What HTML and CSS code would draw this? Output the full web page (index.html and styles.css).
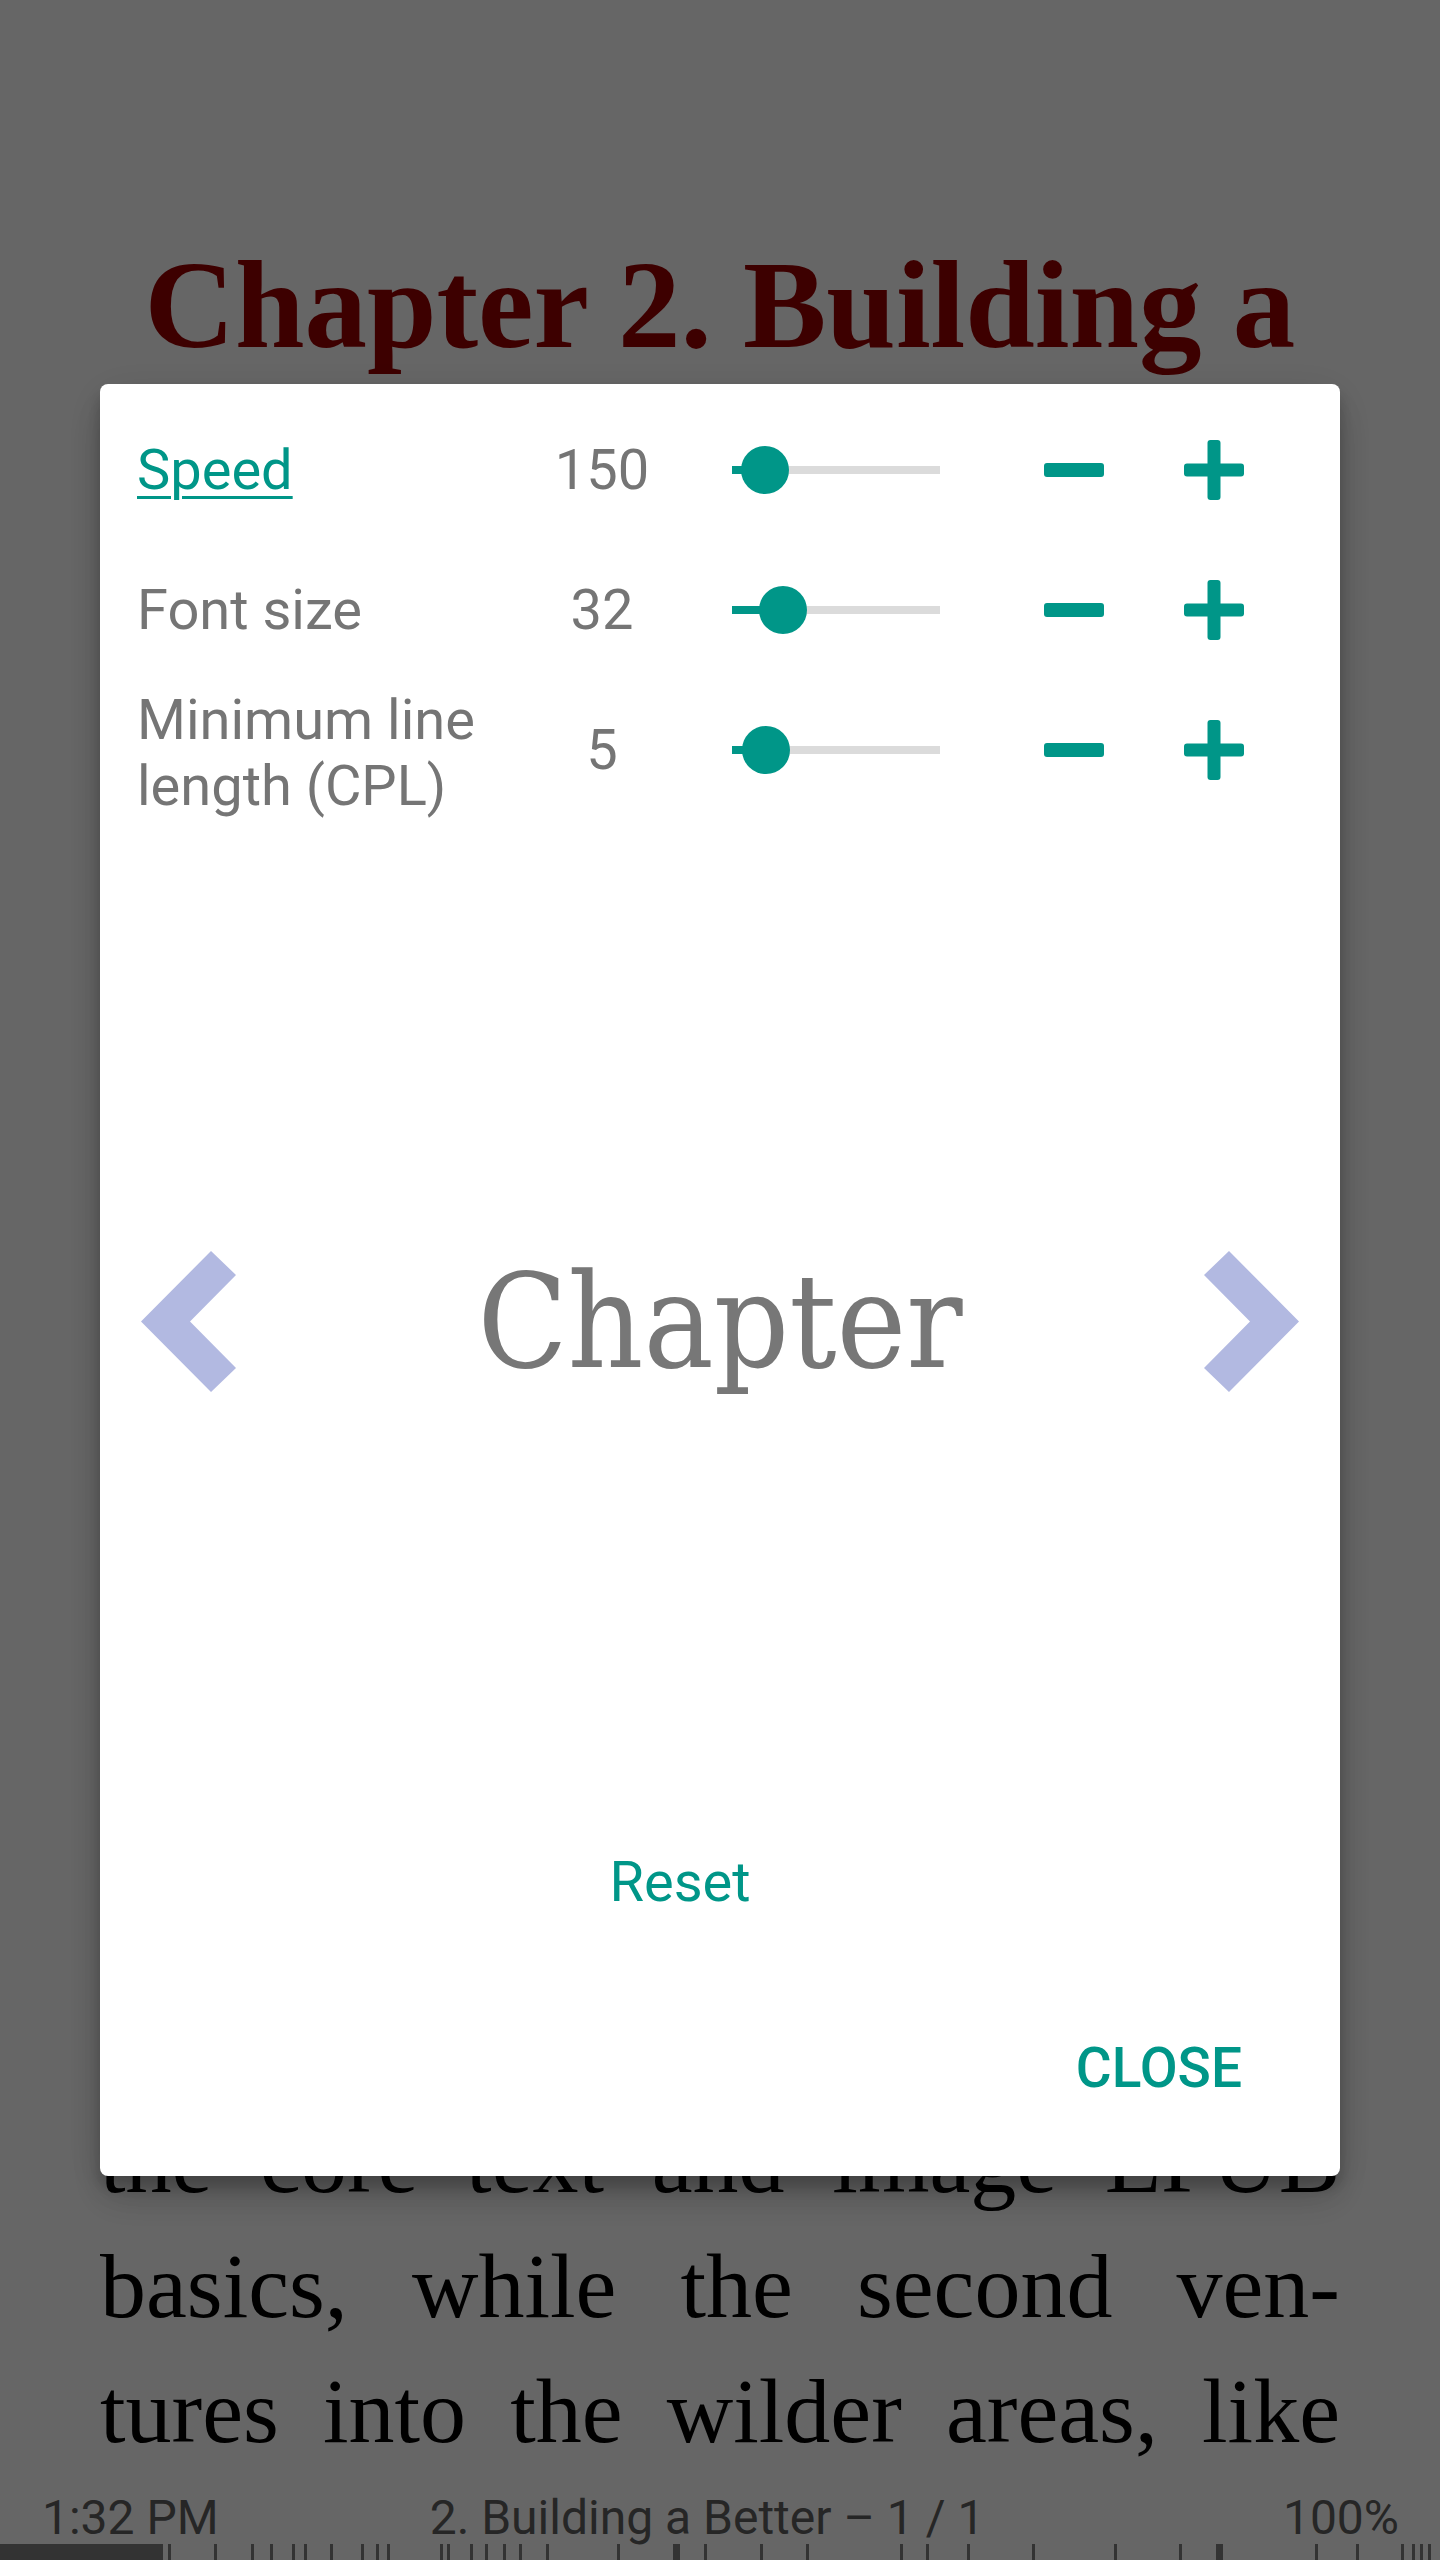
FILE: index.html
```html
<!DOCTYPE html>
<html lang="en">
<head>
<meta charset="utf-8">
<title>Reader – speed reading settings</title>
<link rel="stylesheet" href="styles.css">
</head>
<body>
<div class="screen">
  <main class="reader">
    <h1 class="chapter-title">Chapter 2. Building a Better EPUB: Fundamental Accessibility</h1>
    <p class="body-text">
      <span class="line">Accessibility is not a feature</span>
      <span class="line">that can be bolted on at the</span>
      <span class="line">end of production; it has to</span>
      <span class="line">be designed into the content</span>
      <span class="line">from the very start. Getting</span>
      <span class="line">the fundamentals right makes</span>
      <span class="line">everything that follows much</span>
      <span class="line">simpler. This chapter is split</span>
      <span class="line">into two parts: the first one</span>
      <span class="line">covers the structure of both</span>
      <span class="line">the core text and image EPUB</span>
      <span class="line">basics, while the second ven-</span>
      <span class="line">tures into the wilder areas, like</span>
    </p>
  </main>
  <footer class="status-bar">
    <div class="status-row">
      <span class="time">1:32 PM</span>
      <span class="chapter">2. Building a Better – 1 / 1</span>
      <span class="percent">100%</span>
    </div>
    <div class="progress">
      <div class="progress-fill"></div>
      <span class="tick" style="left:168px"></span>
      <span class="tick" style="left:214px"></span>
      <span class="tick" style="left:251px"></span>
      <span class="tick" style="left:270px"></span>
      <span class="tick" style="left:292px"></span>
      <span class="tick" style="left:304px"></span>
      <span class="tick" style="left:330px"></span>
      <span class="tick" style="left:361px"></span>
      <span class="tick" style="left:376px"></span>
      <span class="tick" style="left:387px"></span>
      <span class="tick" style="left:440px"></span>
      <span class="tick" style="left:447px"></span>
      <span class="tick" style="left:470px"></span>
      <span class="tick" style="left:485px"></span>
      <span class="tick" style="left:503px"></span>
      <span class="tick" style="left:519px"></span>
      <span class="tick" style="left:546px"></span>
      <span class="tick" style="left:617px"></span>
      <span class="tick tick-wide" style="left:673px"></span>
      <span class="tick" style="left:704px"></span>
      <span class="tick" style="left:760px"></span>
      <span class="tick" style="left:806px"></span>
      <span class="tick" style="left:900px"></span>
      <span class="tick" style="left:926px"></span>
      <span class="tick" style="left:967px"></span>
      <span class="tick" style="left:1032px"></span>
      <span class="tick" style="left:1114px"></span>
      <span class="tick" style="left:1179px"></span>
      <span class="tick tick-wide" style="left:1216px"></span>
      <span class="tick" style="left:1315px"></span>
      <span class="tick" style="left:1356px"></span>
      <span class="tick" style="left:1401px"></span>
      <span class="tick" style="left:1412px"></span>
      <span class="tick" style="left:1420px"></span>
      <span class="tick" style="left:1428px"></span>
    </div>
  </footer>
</div>

<div class="overlay">
  <div class="dialog">
    <div class="settings">
      <a class="label label-active" href="#">Speed</a>
      <span class="value">150</span>
      <div class="slider"><div class="track"><div class="fill" style="width:33px"></div><span class="thumb" style="left:33px"></span></div></div>
      <span class="step"><span class="minus"></span></span>
      <span class="step"><svg class="plus" width="60" height="60" viewBox="0 0 60 60"><rect x="0" y="23.5" width="60" height="13" rx="3"/><rect x="23.5" y="0" width="13" height="60" rx="3"/></svg></span>

      <span class="label">Font size</span>
      <span class="value">32</span>
      <div class="slider"><div class="track"><div class="fill" style="width:51px"></div><span class="thumb" style="left:51px"></span></div></div>
      <span class="step"><span class="minus"></span></span>
      <span class="step"><svg class="plus" width="60" height="60" viewBox="0 0 60 60"><rect x="0" y="23.5" width="60" height="13" rx="3"/><rect x="23.5" y="0" width="13" height="60" rx="3"/></svg></span>

      <span class="label label-wrap">Minimum line length (CPL)</span>
      <span class="value">5</span>
      <div class="slider"><div class="track"><div class="fill" style="width:34px"></div><span class="thumb" style="left:34px"></span></div></div>
      <span class="step"><span class="minus"></span></span>
      <span class="step"><svg class="plus" width="60" height="60" viewBox="0 0 60 60"><rect x="0" y="23.5" width="60" height="13" rx="3"/><rect x="23.5" y="0" width="13" height="60" rx="3"/></svg></span>
    </div>

    <div class="preview">
      <svg class="chev" viewBox="0 0 95 141" width="95" height="141"><polygon points="70,0 95,24 49,70.5 95,117 70,141 0,70.5"/></svg>
      <span class="preview-word">Chapter</span>
      <svg class="chev" viewBox="0 0 95 141" width="95" height="141"><polygon points="25,0 0,24 46,70.5 0,117 25,141 95,70.5"/></svg>
    </div>

    <div class="reset-row"><span class="reset">Reset</span></div>

    <div class="actions"><span class="close">CLOSE</span></div>
  </div>
</div>
</body>
</html>
```

FILE: styles.css
```css
html, body {
  margin: 0;
  padding: 0;
}

body {
  width: 1440px;
  height: 2560px;
  overflow: hidden;
  background: #ffffff;
  font-family: Roboto, "Liberation Sans", sans-serif;
}

.screen {
  display: flex;
  flex-direction: column;
  height: 2560px;
}

.reader {
  flex: 1;
  min-height: 0;
  overflow: hidden;
  padding: 0 100px;
}

.chapter-title {
  margin: 230px 0 19px;
  font: bold 125px/150px "Liberation Serif", serif;
  color: #990000;
  text-align: center;
}

.body-text {
  margin: 0;
  font: 92px/125px "Liberation Serif", serif;
  color: #000000;
}

.line {
  display: block;
  text-align: justify;
  text-align-last: justify;
}

.status-bar {
  flex: none;
  height: 68px;
}

.status-row {
  display: flex;
  height: 52px;
  padding: 0 41px 0 42px;
  font-size: 48px;
  line-height: 52px;
  color: #606060;
  white-space: nowrap;
}

.chapter {
  margin-left: 211px;
}

.percent {
  margin-left: auto;
}

.progress {
  position: relative;
  height: 16px;
}

.progress-fill {
  width: 163px;
  height: 16px;
  background: #808080;
}

.tick {
  position: absolute;
  top: 0;
  width: 3px;
  height: 16px;
  background: #808080;
}

.tick-wide {
  width: 7px;
}

/* dialog */
.overlay {
  position: fixed;
  inset: 0;
  background: rgba(0, 0, 0, 0.6);
  display: flex;
  justify-content: center;
  align-items: flex-start;
  padding-top: 384px;
}

.dialog {
  box-sizing: border-box;
  width: 1240px;
  height: 1792px;
  padding-top: 16px;
  background: #ffffff;
  border-radius: 8px;
  box-shadow: 0 24px 38px rgba(0, 0, 0, 0.14), 0 9px 46px rgba(0, 0, 0, 0.12), 0 11px 15px rgba(0, 0, 0, 0.2);
  display: flex;
  flex-direction: column;
}

.settings {
  display: grid;
  grid-template-columns: 380px 170px 253px 164px 140px;
  grid-auto-rows: 140px;
  align-items: center;
  padding-left: 37px;
}

.label {
  font-size: 56px;
  line-height: 66px;
  color: #757575;
  justify-self: start;
}

.label-wrap {
  padding-top: 5px;
}

.label-active {
  color: #009688;
  text-decoration: underline;
  text-decoration-thickness: 3px;
  text-underline-offset: 7px;
}

.value {
  font-size: 56px;
  line-height: 66px;
  color: #757575;
  text-align: center;
}

.slider {
  padding-left: 45px;
}

.track {
  position: relative;
  width: 208px;
  height: 8px;
  background: #dbdbdb;
}

.fill {
  height: 8px;
  background: #009688;
}

.thumb {
  position: absolute;
  top: -20px;
  width: 48px;
  height: 48px;
  margin-left: -24px;
  border-radius: 50%;
  background: #009688;
}

.step {
  justify-self: end;
  display: flex;
  align-items: center;
}

.minus {
  display: block;
  width: 60px;
  height: 14px;
  border-radius: 3px;
  background: #009688;
}

.plus {
  display: block;
  fill: #009688;
}

.preview {
  height: 1002px;
  display: flex;
  align-items: center;
  padding: 0 41px;
}

.chev {
  flex: none;
  fill: #b2b9e1;
}

.preview-word {
  flex: 1;
  text-align: center;
  font-family: "DejaVu Serif Condensed", "DejaVu Serif", serif;
  font-size: 131px;
  line-height: 1;
  color: #777777;
}

.reset-row {
  margin-top: 27px;
  padding: 0 117px 0 37px;
  text-align: center;
  font-size: 56px;
  line-height: 66px;
  color: #009688;
}

.actions {
  margin-top: 120px;
  display: flex;
  justify-content: flex-end;
  padding-right: 98px;
}

.close {
  font-size: 55px;
  line-height: 66px;
  font-weight: 500;
  color: #009688;
}
```
